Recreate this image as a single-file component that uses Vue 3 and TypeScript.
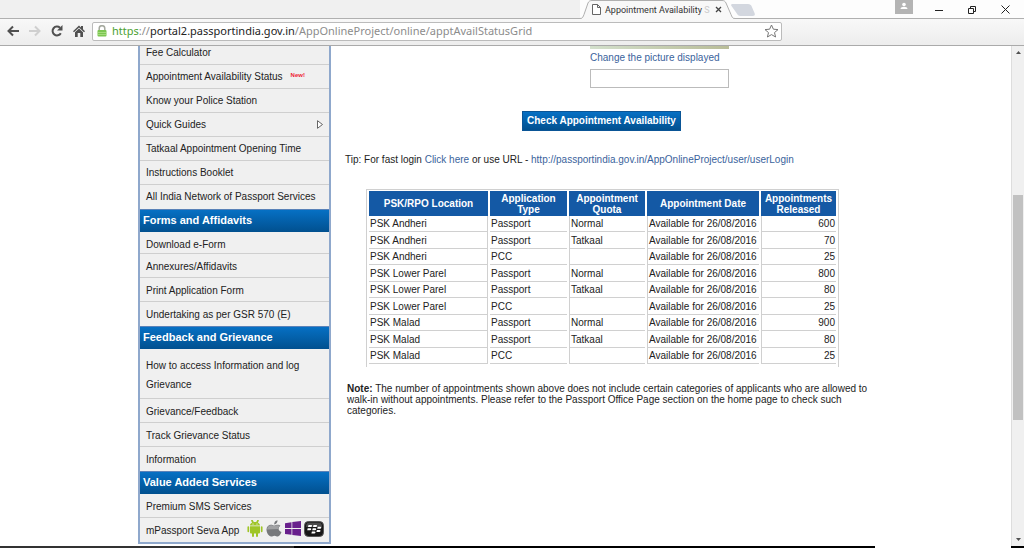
<script setup lang="ts">
interface Item {
  label: string
  kind?: 'short' | 'tall'
  isNew?: boolean
  arrow?: boolean
  apps?: boolean
}
interface Section {
  title?: string
  items: Item[]
}

const sections: Section[] = [
  {
    items: [
      { label: 'Fee Calculator' },
      { label: 'Appointment Availability Status', isNew: true },
      { label: 'Know your Police Station' },
      { label: 'Quick Guides', arrow: true },
      { label: 'Tatkaal Appointment Opening Time' },
      { label: 'Instructions Booklet' },
      { label: 'All India Network of Passport Services' },
    ],
  },
  {
    title: 'Forms and Affidavits',
    items: [
      { label: 'Download e-Form', kind: 'short' },
      { label: 'Annexures/Affidavits' },
      { label: 'Print Application Form' },
      { label: 'Undertaking as per GSR 570 (E)' },
    ],
  },
  {
    title: 'Feedback and Grievance',
    items: [
      { label: 'How to access Information and log Grievance', kind: 'tall' },
      { label: 'Grievance/Feedback' },
      { label: 'Track Grievance Status' },
      { label: 'Information' },
    ],
  },
  {
    title: 'Value Added Services',
    items: [
      { label: 'Premium SMS Services' },
      { label: 'mPassport Seva App', apps: true },
    ],
  },
]

const columns: string[] = [
  'PSK/RPO Location',
  'Application Type',
  'Appointment Quota',
  'Appointment Date',
  'Appointments Released',
]

const counts: Record<string, number[]> = {
  'PSK Andheri': [600, 70, 25],
  'PSK Lower Parel': [800, 80, 25],
  'PSK Malad': [900, 80, 25],
}
const kinds: [string, string][] = [
  ['Passport', 'Normal'],
  ['Passport', 'Tatkaal'],
  ['PCC', ''],
]
const rows = Object.entries(counts).flatMap(([place, values]) =>
  values.map((count, i) => ({ place, type: kinds[i][0], quota: kinds[i][1], count })),
)
</script>

<template>
  <div class="window">
    <header class="titlebar">
      <div class="strip"></div>
      <div class="tab">
        <svg class="tab-shape" viewBox="0 0 156 20" width="156" height="20" aria-hidden="true">
          <path d="M152 4h16c2 0 3 1 3.500 2l3 7c1 2 0 3-2 3h-12c-2 0-3-1-4-3l-5-7c-1-1 0-2 .5-2z" fill="#d3d7df" />
          <path d="M0 18.500c3 0 3-2 4-4L8 3c1-2 2-2.500 4-2.500h130c2 0 3 .5 4 2.500l5 11.500c1 2 1 4 4 4V20H0z" fill="#f8f8f8" />
          <path d="M0 18.500c3 0 3-2 4-4L8 3c1-2 2-2.500 4-2.500h130c2 0 3 .5 4 2.500l5 11.500c1 2 1 4 4 4h1" fill="none" stroke="#b0b0b0" />
        </svg>
        <div class="tab-content">
          <svg width="9" height="11" viewBox="0 0 9 11" aria-hidden="true">
            <path d="M.5.5h5l3 3v7h-8zM5.500.5v3h3" fill="#fff" stroke="#666" />
          </svg>
          <span class="tab-title">Appointment Availability <span class="faded">S</span></span>
          <button class="plain" type="button" aria-label="Close tab">
            <svg width="7" height="7" viewBox="0 0 7 7"><path d="M1 1l5 5M6 1L1 6" stroke="#444" stroke-width="1.300" /></svg>
          </button>
        </div>
      </div>
      <div class="controls">
        <button class="plain user" type="button" aria-label="Profile">
          <svg width="18" height="14" viewBox="0 0 18 14"><rect width="18" height="14" fill="#b4b4b4" /><circle cx="9" cy="4.500" r="1.800" fill="#fff" /><path d="M5.500 9c0-3 7-3 7 0z" fill="#fff" /></svg>
        </button>
        <button class="plain" type="button" aria-label="Minimize">
          <svg width="8" height="8" viewBox="0 0 8 8"><path d="M0 4.500h8" stroke="#222" /></svg>
        </button>
        <button class="plain" type="button" aria-label="Restore">
          <svg width="8" height="8" viewBox="0 0 8 8"><path d="M.5 2.500h5v5h-5zM2.500 2V.5h5v5H6" fill="none" stroke="#222" /></svg>
        </button>
        <button class="plain" type="button" aria-label="Close">
          <svg width="9" height="9" viewBox="0 0 9 9"><path d="M.5.5l8 8M8.500.5l-8 8" stroke="#222" /></svg>
        </button>
      </div>
    </header>

    <nav class="toolbar" aria-label="Browser">
      <button class="plain" type="button" aria-label="Back">
        <svg width="12" height="12" viewBox="0 0 12 12"><path d="M12 6H2M6 1.500L1.500 6 6 10.500" fill="none" stroke="#505050" stroke-width="2" /></svg>
      </button>
      <button class="plain" type="button" aria-label="Forward">
        <svg width="12" height="12" viewBox="0 0 12 12"><path d="M0 6h10M6 1.500L10.500 6 6 10.500" fill="none" stroke="#cfcfcf" stroke-width="2" /></svg>
      </button>
      <button class="plain" type="button" aria-label="Reload">
        <svg width="12" height="12" viewBox="0 0 12 12"><path d="M9.800 8.200A4.400 4.400 0 1 1 9 2.800" fill="none" stroke="#505050" stroke-width="2" /><path d="M11.500 0v5.500H6z" fill="#505050" /></svg>
      </button>
      <button class="plain" type="button" aria-label="Home">
        <svg width="12" height="12" viewBox="0 0 12 12"><path d="M6 .5L0 6.300l1 .9L6 2.500l5 4.700 1-.9-2-2V1H8v1.400z" fill="#505050" /><path d="M2 7.200l4-3.800 4 3.800V12H7.300V8H4.700v4H2z" fill="#505050" /></svg>
      </button>
      <div class="address">
        <svg width="10" height="12" viewBox="0 0 10 12" aria-hidden="true"><path d="M2.200 6V3.500a2.800 2.800 0 0 1 5.600 0V6" fill="none" stroke="#a5a99f" stroke-width="1.500" /><rect x=".5" y="5" width="9" height="6.500" rx="1" fill="#7cc651" /><path d="M1 7.500h8M1 9.500h8" stroke="#a4dc7c" /></svg>
        <span class="url"><span class="scheme">https</span><span class="dim">://</span>portal2.passportindia.gov.in<span class="dim">/AppOnlineProject/online/apptAvailStatusGrid</span></span>
        <button class="plain" type="button" aria-label="Bookmark">
          <svg width="15" height="14" viewBox="0 0 15 14"><path d="M7.500 1l1.900 4.200 4.600.4-3.500 3 1.100 4.400-4.100-2.400L3.400 13l1.100-4.400L1 5.600l4.600-.4z" fill="#fff" stroke="#777" /></svg>
        </button>
      </div>
    </nav>

    <div class="viewport">
      <aside class="sidebar">
        <section v-for="(section, i) in sections" :key="i">
          <h2 v-if="section.title">{{ section.title }}</h2>
          <ul>
            <li v-for="item in section.items" :key="item.label" :class="item.kind">
              <a href="#">{{ item.label }}</a>
              <span v-if="item.isNew" class="new">New!</span>
              <svg v-if="item.arrow" class="arrow" width="6" height="9" viewBox="0 0 6 9" aria-hidden="true"><path d="M.5.7v7.600l5-3.800z" fill="#fff" stroke="#555" stroke-width=".9" /></svg>
              <span v-if="item.apps" class="apps">
                <svg width="16" height="17" viewBox="0 0 16 17" role="img" aria-label="Android">
                  <path d="M3 5.500C3 .8 13 .8 13 5.500zM3 6.200h10v6.300a1 1 0 0 1-1 1h-1V16a1 1 0 0 1-2 0v-2.500H7V16a1 1 0 0 1-2 0v-2.500H4a1 1 0 0 1-1-1z" fill="#9fc526" />
                  <path d="M1.300 7v4.300M14.700 7v4.300M5 .5l1 2M11 .5l-1 2" stroke="#9fc526" stroke-width="1.700" stroke-linecap="round" />
                  <circle cx="6" cy="4" r=".6" fill="#fff" /><circle cx="10" cy="4" r=".6" fill="#fff" />
                </svg>
                <svg width="16" height="17" viewBox="0 0 16 17" role="img" aria-label="Apple">
                  <path d="M8.200 4.500C8 2 9.500.6 11.500.2c.2 2.200-1.200 4-3.300 4.300zM14.500 5.800c-3 1.700-2.200 5.200 1 6.300-.7 2-2.200 4.400-3.700 4.400-1.300 0-1.800-.8-3.300-.8s-2 .8-3.300.8C2.800 16.500.3 12.800.5 9.300.8 5.200 4.300 3.900 6.500 5c1.500.7 2 .7 3.500 0 1.600-.7 3.500-.4 4.500.8z" fill="#77797c" />
                  <path d="M1 9.500C1.300 6 4.500 4.500 6.500 5.500c1.500.7 2 .7 3.500 0 1.500-.6 3-.4 4 .4-1.500 1-1.800 2-1.700 3z" fill="#a0a1a3" />
                </svg>
                <svg width="16" height="15" viewBox="0 0 16 15" role="img" aria-label="Windows"><path d="M0 2.200L6.500 1.200v5.900H0zM7.300 1.100L16 0v7.100H7.300zM0 7.900h6.500v5.900L0 12.900zM7.300 7.900H16V15l-8.700-1.100z" fill="#69208d" /></svg>
                <svg width="20" height="16" viewBox="0 0 20 16" role="img" aria-label="BlackBerry">
                  <rect x=".5" y=".5" width="19" height="15" rx="4" fill="#171717" stroke="#555" />
                  <path d="M2 6c0-3 1-4.500 3-4.500h10c2 0 3 1.500 3 4.500z" fill="#4a4a4a" />
                  <path d="M4.500 4h2.600q1.200 0 1 1t-1.300 1H4zM9.500 4h2.600q1.200 0 1 1t-1.300 1H9zM3.700 7.300h2.600q1.200 0 1 1t-1.300 1H3.200zM8.700 7.300h2.600q1.200 0 1 1t-1.300 1H8.200zM13.700 5.700h2.600q1.200 0 1 1t-1.300 1h-2.800zM12.900 9h2.600q1.200 0 1 1t-1.300 1h-2.800zM7.900 10.600h2.600q1.200 0 1 1t-1.300 1H7.400z" fill="#fff" />
                </svg>
              </span>
            </li>
          </ul>
        </section>
      </aside>

      <main class="main">
        <form class="captcha" @submit.prevent>
          <div class="picture"></div>
          <a class="link" href="#">Change the picture displayed</a>
          <input type="text" aria-label="Characters shown in the picture" />
          <button class="check" type="submit">Check Appointment Availability</button>
        </form>
        <p class="tip">Tip: For fast login <a class="link" href="#">Click here</a> or use URL - <a class="link" href="#">http://passportindia.gov.in/AppOnlineProject/user/userLogin</a></p>
        <table>
          <colgroup><col class="c1" /><col class="c2" /><col class="c3" /><col class="c4" /><col /></colgroup>
          <thead>
            <tr><th v-for="column in columns" :key="column" scope="col">{{ column }}</th></tr>
          </thead>
          <tbody>
            <tr v-for="(row, i) in rows" :key="i">
              <td>{{ row.place }}</td>
              <td>{{ row.type }}</td>
              <td>{{ row.quota }}</td>
              <td>Available for 26/08/2016</td>
              <td>{{ row.count }}</td>
            </tr>
          </tbody>
        </table>
        <p class="note"><b>Note:</b> The number of appointments shown above does not include certain categories of applicants who are allowed to walk-in without appointments. Please refer to the Passport Office Page section on the home page to check such categories.</p>
      </main>

      <div class="scrollbar" aria-hidden="true">
        <svg width="5" height="3" viewBox="0 0 5 3"><path d="M0 3L2.500 0 5 3z" fill="#505050" /></svg>
        <div class="thumb"></div>
        <svg width="5" height="3" viewBox="0 0 5 3"><path d="M0 0h5L2.500 3z" fill="#505050" /></svg>
      </div>
    </div>
    <footer class="taskbar"></footer>
  </div>
</template>

<style>
body {
  margin: 0;
  overflow: hidden;
}
</style>

<style scoped>
.window {
  display: flex;
  flex-direction: column;
  height: 100vh;
  background: #fff;
  color: #222;
  font: 10px/12px "Liberation Sans", Arial, sans-serif;
}
.window * {
  box-sizing: border-box;
}
svg {
  display: block;
  flex: none;
}
a {
  color: inherit;
  text-decoration: none;
}
.plain {
  display: flex;
  padding: 0;
  border: 0;
  background: none;
}
.titlebar {
  display: flex;
  flex: none;
  height: 19px;
  background: linear-gradient(#fdfdfd 18px, #b0b0b0 18px);
}
.strip {
  flex: 0 1 580px;
  background: linear-gradient(#f0f0f0 18px, #b0b0b0 18px);
}
.tab {
  position: relative;
  flex: none;
  width: 156px;
}
.tab-shape {
  position: absolute;
  inset: 0;
  overflow: visible;
}
.tab-content {
  position: relative;
  display: flex;
  align-items: center;
  height: 19px;
  padding: 0 14px 0 12px;
  gap: 4px;
}
.tab-title {
  flex: 1;
  white-space: nowrap;
  color: #333;
  font: 9px/14px Roboto, sans-serif;
}
.faded {
  color: #ccc;
}
.controls {
  display: flex;
  flex: 1;
  align-items: center;
  justify-content: flex-end;
  gap: 25px;
  padding-right: 14px;
}
.user {
  align-self: flex-start;
  margin-right: -3px;
}
.toolbar {
  display: flex;
  flex: none;
  align-items: center;
  gap: 10px;
  height: 27px;
  padding: 0 8px 2px 7px;
  border-bottom: 1px solid #aaa;
  background: linear-gradient(#f8f8f8, #ededed);
}
.address {
  display: flex;
  flex: 0 1 690px;
  align-items: center;
  gap: 5px;
  height: 19px;
  margin-left: -3px;
  padding: 0 2px 0 4px;
  border: 1px solid #bbb;
  border-radius: 2px;
  background: #fff;
}
.url {
  flex: 1;
  overflow: hidden;
  white-space: nowrap;
  font: 11px/16px "Noto Sans", "Open Sans", sans-serif;
}
.scheme {
  color: #4b9f2f;
}
.dim {
  color: #8c8c8c;
}
.viewport {
  display: flex;
  flex: 1;
  min-height: 0;
  overflow: hidden;
}
.sidebar {
  flex: none;
  align-self: flex-start;
  width: 193px;
  margin: -5px 0 0 138px;
  border: 2px solid #8fa8cc;
  border-top: 0;
  background: #f0f0f0;
}
h2 {
  margin: 0;
  padding: 0 3px 1px;
  border-top: 1px solid #5a82b8;
  background: linear-gradient(#0670c4, #01508f);
  color: #fff;
  font-size: 11px;
  line-height: 21px;
}
ul {
  margin: 0;
  padding: 0;
  list-style: none;
}
li {
  display: flex;
  align-items: center;
  height: 24px;
  padding: 0 6px;
  border-bottom: 1px solid #cfcfcf;
}
h2 + ul li {
  padding-top: 2px;
}
li:last-child {
  border-bottom: 0;
}
h2 + ul .short {
  height: 22px;
  padding-top: 4px;
}
.tall {
  height: 50px;
  line-height: 19px;
}
.new {
  align-self: flex-start;
  margin: 4px 0 0 8px;
  color: #e23;
  font-size: 6px;
  font-weight: bold;
}
.arrow {
  margin-left: auto;
}
.apps {
  display: flex;
  align-items: center;
  gap: 3px;
  margin-left: auto;
  margin-top: -5px;
}
li:has(.apps) {
  padding-right: 5px;
  white-space: nowrap;
}
.main {
  flex: 1;
  min-width: 0;
  padding-left: 14px;
}
.captcha {
  display: flex;
  flex-direction: column;
  align-items: flex-start;
  padding-left: 245px;
}
.picture {
  width: 139px;
  height: 3px;
  background: linear-gradient(90deg, #d3e0cc, #b9bd98);
}
.link {
  color: #3a639c;
}
.captcha .link {
  margin-top: 3px;
}
.captcha input {
  width: 139px;
  height: 19px;
  margin-top: 5px;
  padding: 0 3px;
  border: 1px solid #bbb;
  background: #fff;
  font: inherit;
}
.check {
  height: 20px;
  margin: 23px 0 0 -68px;
  padding: 0 4px;
  border: 1px solid #0a5596;
  background: linear-gradient(#0670c4, #01508f);
  color: #fff;
  font: bold 10px/18px "Liberation Sans", Arial, sans-serif;
}
.tip {
  margin: 23px 0 0;
}
table {
  width: 473px;
  margin: 23px 0 0 21px;
  padding-bottom: 3px;
  table-layout: fixed;
  border: 1px solid #d0d0d0;
  border-bottom: 0;
  border-spacing: 2px 0;
}
.c1 {
  width: 119px;
}
.c2 {
  width: 77px;
}
.c3 {
  width: 76px;
}
.c4 {
  width: 112px;
}
th {
  height: 26px;
  padding: 0;
  border-top: 1px solid #fff;
  background: #1459a5;
  background-clip: padding-box;
  color: #fff;
  line-height: 11px;
}
td {
  height: 16px;
  padding: 0 1px;
  border-bottom: 1px solid #d0d0d0;
  line-height: 15px;
}
tbody tr:nth-child(even) td {
  height: 17px;
}
td:first-child {
  border-right: 1px solid #d0d0d0;
}
td:nth-child(n + 3) {
  border-left: 1px solid #d0d0d0;
}
td:last-child {
  text-align: right;
}
.note {
  max-width: 524px;
  margin: 16px 0 0 2px;
  line-height: 11px;
}
.scrollbar {
  display: flex;
  flex: none;
  flex-direction: column;
  align-items: center;
  width: 13px;
  padding: 5px 0;
  border-left: 1px solid #ddd;
  background: #f0f0f0;
}
.thumb {
  width: 10px;
  height: 46%;
  margin: 141px 0 auto;
  background: #c1c1c1;
}
.taskbar {
  flex: none;
  height: 2px;
  background: linear-gradient(90deg, #333 294px, #000 294px 875px, #fff 875px calc(100% - 13px), #000 0);
}
</style>
